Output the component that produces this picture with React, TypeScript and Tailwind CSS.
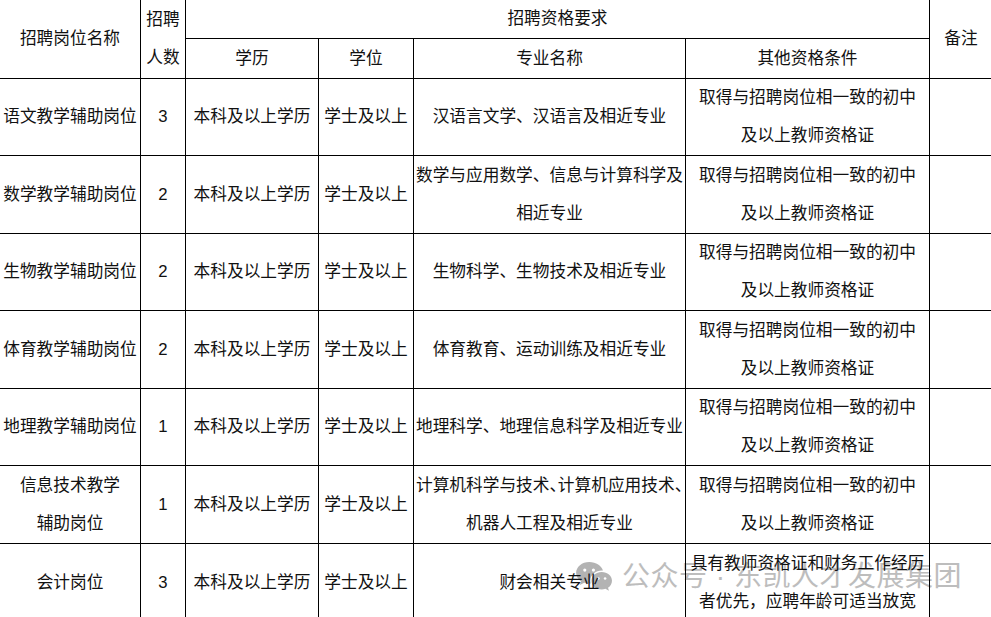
import React from 'react';

type Row = {
  name: string[];
  count: string;
  major: string[];
  other: string[];
  squeeze?: boolean;
};

const rows: Row[] = [
  { name: ['语文教学辅助岗位'], count: '3', major: ['汉语言文学、汉语言及相近专业'], other: ['取得与招聘岗位相一致的初中', '及以上教师资格证'] },
  { name: ['数学教学辅助岗位'], count: '2', major: ['数学与应用数学、信息与计算科学及', '相近专业'], other: ['取得与招聘岗位相一致的初中', '及以上教师资格证'] },
  { name: ['生物教学辅助岗位'], count: '2', major: ['生物科学、生物技术及相近专业'], other: ['取得与招聘岗位相一致的初中', '及以上教师资格证'] },
  { name: ['体育教学辅助岗位'], count: '2', major: ['体育教育、运动训练及相近专业'], other: ['取得与招聘岗位相一致的初中', '及以上教师资格证'] },
  { name: ['地理教学辅助岗位'], count: '1', major: ['地理科学、地理信息科学及相近专业'], other: ['取得与招聘岗位相一致的初中', '及以上教师资格证'] },
  { name: ['信息技术教学', '辅助岗位'], count: '1', major: ['计算机科学与技术、计算机应用技术、', '机器人工程及相近专业'], other: ['取得与招聘岗位相一致的初中', '及以上教师资格证'], squeeze: true },
  { name: ['会计岗位'], count: '3', major: ['财会相关专业'], other: ['具有教师资格证和财务工作经历', '者优先，应聘年龄可适当放宽'] },
];

const Cell: React.FC<{ className?: string; last?: boolean; children?: React.ReactNode }> = ({ className = '', last, children }) => (
  <div
    className={`flex flex-col items-center justify-center text-center whitespace-nowrap border-b border-black ${last ? '' : 'border-r'} ${className}`}
  >
    {children}
  </div>
);

const Lines: React.FC<{ lines: string[]; squeeze?: boolean }> = ({ lines, squeeze }) => (
  <>
    {lines.map((l, i) => (
      <span key={i} className={squeeze && i === 0 ? "[font-feature-settings:'halt']" : ''}>
        {l}
      </span>
    ))}
  </>
);

const WeChatIcon = () => (
  <svg width="38" height="32" viewBox="0 0 40 34">
    <g fill="#9a9a9a">
      <path d="M15 1C7.3 1 1 6.2 1 12.6c0 3.7 2 6.9 5.2 9.1L5 25.6l4.6-2.4c1.7.5 3.5.8 5.4.8.5 0 1 0 1.5-.1-.3-1-.5-2-.5-3.1 0-6 5.6-10.8 12.6-10.8h.9C28.1 5 22.2 1 15 1z" />
      <path d="M28.2 11.6c-6 0-10.9 4.1-10.9 9.3s4.9 9.3 10.9 9.3c1.4 0 2.7-.2 3.9-.6l3.8 2-1-3.2c2.6-1.7 4.2-4.4 4.2-7.5 0-5.2-4.9-9.3-10.9-9.3z" />
    </g>
    <g fill="#ffffff">
      <circle cx="10.2" cy="9.6" r="1.7" />
      <circle cx="19.4" cy="9.6" r="1.7" />
      <circle cx="24.6" cy="18.6" r="1.4" />
      <circle cx="31.8" cy="18.6" r="1.4" />
    </g>
  </svg>
);

export default function App() {
  return (
    <div className="relative w-[991px] h-[617px] overflow-hidden bg-white text-[#111] font-['Liberation_Sans','Noto_Sans_CJK_SC',sans-serif] text-[16.7px] leading-[38px]">
      {/* watermark, sits under the table text */}
      <div className="absolute left-[575px] top-[560px] flex items-center gap-[9px] opacity-75 pointer-events-none">
        <WeChatIcon />
        <span className="text-[28px] leading-[34px] text-[#a8a8a8] tracking-[0.5px]">公众号 · 东凯人才发展集团</span>
      </div>

      <div className="relative grid grid-cols-[141px_45px_133px_95px_272px_244px_62px] grid-rows-[39px_40px_77px_78px_77px_78px_77px_78px_78px]">
        {/* header */}
        <Cell className="row-span-2">招聘岗位名称</Cell>
        <Cell className="row-span-2">
          <span>招聘</span>
          <span>人数</span>
        </Cell>
        <Cell className="col-span-4">招聘资格要求</Cell>
        <Cell className="row-span-2" last>
          备注
        </Cell>
        <Cell>学历</Cell>
        <Cell>学位</Cell>
        <Cell>专业名称</Cell>
        <Cell>其他资格条件</Cell>

        {/* body */}
        {rows.map((r, i) => (
          <React.Fragment key={i}>
            <Cell>
              <Lines lines={r.name} />
            </Cell>
            <Cell>{r.count}</Cell>
            <Cell>本科及以上学历</Cell>
            <Cell>学士及以上</Cell>
            <Cell>
              <Lines lines={r.major} squeeze={r.squeeze} />
            </Cell>
            <Cell>
              <Lines lines={r.other} />
            </Cell>
            <Cell last />
          </React.Fragment>
        ))}
      </div>
    </div>
  );
}
